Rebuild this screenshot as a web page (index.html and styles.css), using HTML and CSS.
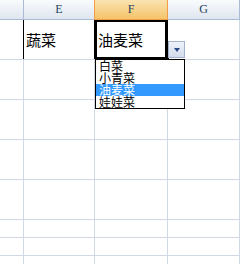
FILE: index.html
```html
<!DOCTYPE html>
<html lang="zh">
<head>
    <meta charset="UTF-8">
    <title>数据有效性</title>
    <link rel="stylesheet" href="styles.css">
</head>
<body>

    <div class="Hoja">
        <div class="Cabecera">
            <div class="Col Esquina"></div>
            <div class="Col">E</div>
            <div class="Col Activa">F</div>
            <div class="Col">G</div>
        </div>

        <div class="Celdas">
            <div class="Celda"></div>
            <div class="Celda Marcada">蔬菜</div>
            <div class="Celda Texto">油麦菜</div>
            <div class="Celda"></div>

            <div class="Celda"></div><div class="Celda"></div><div class="Celda"></div><div class="Celda"></div>
            <div class="Celda"></div><div class="Celda"></div><div class="Celda"></div><div class="Celda"></div>
            <div class="Celda"></div><div class="Celda"></div><div class="Celda"></div><div class="Celda"></div>
            <div class="Celda"></div><div class="Celda"></div><div class="Celda"></div><div class="Celda"></div>
            <div class="Celda"></div><div class="Celda"></div><div class="Celda"></div><div class="Celda"></div>
            <div class="Celda"></div><div class="Celda"></div><div class="Celda"></div><div class="Celda"></div>
            <div class="Celda"></div><div class="Celda"></div><div class="Celda"></div><div class="Celda"></div>
        </div>

        <!-- cosas que van encima de la hoja -->
        <div class="Seleccion"></div>
        <div class="Asa"></div>
        <div class="Boton"><span class="Flecha"></span></div>
        <ul class="Lista">
            <li>白菜</li>
            <li>小青菜</li>
            <li class="Elegido">油麦菜</li>
            <li>娃娃菜</li>
        </ul>
    </div>

</body>
</html>
```

FILE: styles.css
```css
body {
    margin: 0;
    background: #fff;
    font-family: "Noto Sans CJK SC", sans-serif;
}

.Hoja {
    position: relative;
    width: 240px;
    height: 264px;
    overflow: hidden;
}

.Cabecera {
    display: grid;
    grid-template-columns: 23px 70px 72px 71px;
    column-gap: 1px;
    padding: 0 1px 1px 0;
    height: 19px;
    background: #a9bcd3;
}

.Col {
    display: flex;
    justify-content: center;
    align-items: center;
    background: linear-gradient(#f9fbfd, #dfe6f0);
    font-family: "Liberation Serif", serif;
    font-size: 12px;
    color: #27415f;
}

.Esquina {
    background: linear-gradient(#f9fbfd, #dfe6f0);
}

.Col.Activa {
    background: linear-gradient(#fbe3b0, #f4c46a);
    box-shadow: 0 0 0 1px #f29d45;
}

.Celdas {
    display: grid;
    grid-template-columns: 23px 70px 72px 71px;
    grid-template-rows: 39px 39px 39px 39px 39px 17px 17px 8px;
    gap: 1px;
    padding-right: 1px;
    background: #d0d7e5;
}

.Celda {
    background: #fff;
    display: flex;
    align-items: center;
    font-size: 15px;
    color: #000;
}

.Marcada {
    padding-left: 2px;
    box-shadow: -1px 0 0 #000, 1px 0 0 #000;
}

.Texto {
    padding-left: 3px;
}

.Seleccion {
    position: absolute;
    left: 95px;
    top: 20px;
    width: 73px;
    height: 39px;
    box-sizing: border-box;
    border: 2px solid #000;
    border-right-width: 3px;
}

.Asa {
    position: absolute;
    left: 165px;
    top: 56px;
    width: 4px;
    height: 4px;
    background: #000;
}

.Boton {
    position: absolute;
    left: 168px;
    top: 41px;
    width: 17px;
    height: 17px;
    box-sizing: border-box;
    border: 1px solid #a3b3cf;
    background: linear-gradient(#eef2f8, #d3dcec);
    display: flex;
    justify-content: center;
    align-items: center;
}

.Flecha {
    width: 0;
    height: 0;
    border-left: 3px solid transparent;
    border-right: 3px solid transparent;
    border-top: 4px solid #28488a;
    margin-top: 1px;
}

.Lista {
    position: absolute;
    left: 95px;
    top: 59px;
    width: 90px;
    height: 50px;
    box-sizing: border-box;
    margin: 0;
    padding: 0;
    list-style: none;
    border: 1px solid #000;
    background: #fff;
    overflow: hidden;
}

.Lista li {
    height: 12px;
    line-height: 12px;
    padding-left: 3px;
    font-size: 12px;
    color: #000;
    overflow: hidden;
}

.Lista li.Elegido {
    background: #3399ff;
    color: #fff;
}
```
